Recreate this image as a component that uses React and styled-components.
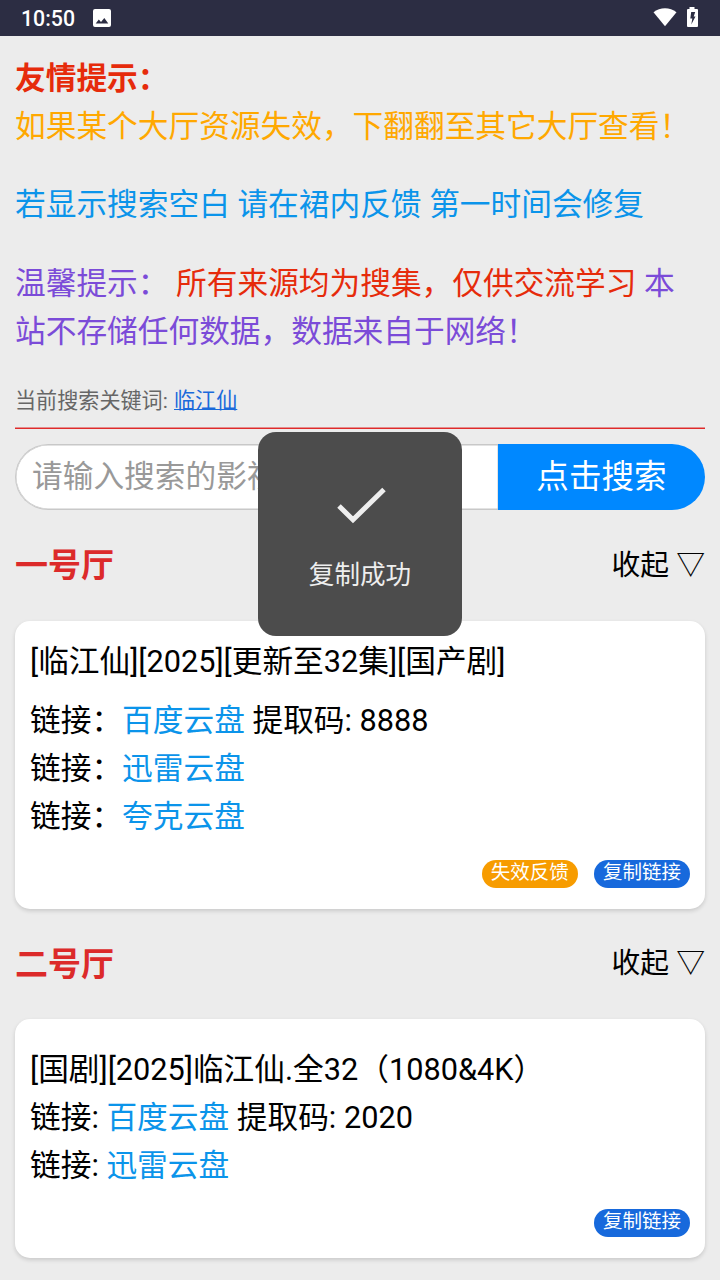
import React from "react";
import styled, { createGlobalStyle } from "styled-components";

const GlobalStyle = createGlobalStyle`
  * { box-sizing: border-box; }
  body {
    margin: 0;
    background: #ececec;
    color: #000;
    font-family: Roboto, "Noto Sans CJK SC", sans-serif;
    font-size: 30.7px;
    line-height: 48px;
  }
`;

const Screen = styled.div`
  width: 720px;
  height: 1280px;
  overflow: hidden;
  position: relative;
  background: #ececec;
`;

const StatusBar = styled.header`
  height: 36px;
  padding: 0 21px;
  display: flex;
  align-items: center;
  background: #2c2d43;
  color: #fff;
  font-size: 21.3px;
  font-weight: 500;
  line-height: 36px;

  svg { display: block; fill: #fff; }
`;

const Clock = styled.span`
  width: 72.4px;
  padding-top: 2px;
`;

const StatusIcons = styled.div`
  margin-left: auto;
  padding-bottom: 2px;
  display: flex;
  align-items: center;
  gap: 9px;
`;

const Content = styled.main`
  padding: 19px 15px 0;
`;

const Notice = styled.p`
  margin: 0 0 30.4px;
  color: ${(p) => p.$color};
`;

const Alert = styled.span`
  color: #e62b0b;
  font-weight: ${(p) => (p.$bold ? 700 : 400)};
`;

const Keyword = styled.div`
  height: 41px;
  color: #666;
  font-size: 21.1px;
  line-height: 29px;
`;

const KeywordLink = styled.a`
  color: #1a6adb;
  text-decoration: underline;
  text-decoration-thickness: 1px;
  margin-left: 1px;
`;

const Divider = styled.div`
  height: 2px;
  border-top: 1px solid #e38e8e;
  background: #e02a2a;
`;

const SearchBar = styled.form`
  display: flex;
  height: 66px;
  margin-top: 15px;
`;

const SearchInput = styled.input`
  flex: 1;
  min-width: 0;
  padding: 0 16px;
  border: 1px solid #c8c8c8;
  border-right: 0;
  border-radius: 33px 0 0 33px;
  background: #fff;
  box-shadow: inset 0 0 0 0.5px #c8c8c8;
  font: inherit;
  outline: 0;

  &::placeholder { color: #999; }
`;

const SearchButton = styled.button`
  width: 207px;
  padding: 0;
  border: 0;
  border-radius: 0 33px 33px 0;
  background: #0088ff;
  color: #fff;
  font: inherit;
  font-size: 32.6px;
`;

const HallHeader = styled.div`
  display: flex;
  align-items: center;
  justify-content: space-between;
  height: ${(p) => p.$height}px;
`;

const HallTitle = styled.h2`
  margin: 0;
  padding-top: 1px;
  color: #dc2a2a;
  font-size: 33px;
  font-weight: 700;
`;

const Collapse = styled.span`
  padding-bottom: 2px;
  font-size: 28.8px;
`;

const Card = styled.section`
  display: flex;
  flex-direction: column;
  height: ${(p) => p.$height}px;
  padding: ${(p) => p.$top}px 15px 21px;
  border-radius: 15px;
  background: #fff;
  box-shadow: 0 2px 4px rgba(0, 0, 0, 0.15);
`;

const CardTitle = styled.div`
  margin-bottom: ${(p) => p.$gap || 0}px;
`;

const DriveLink = styled.a`
  color: #0b94ea;
`;

const Actions = styled.div`
  display: flex;
  justify-content: flex-end;
  gap: 16px;
  margin-top: auto;
`;

const Pill = styled.button`
  width: 96.2px;
  height: 28.6px;
  padding: 0 0 2.6px;
  border: 0;
  border-radius: 14.3px;
  background: ${(p) => p.$color};
  color: #fff;
  font: inherit;
  font-size: 19.5px;
  line-height: 25px;
`;

const Toast = styled.div`
  position: absolute;
  top: 432px;
  left: 258px;
  width: 204px;
  height: 204px;
  padding-top: 44px;
  display: flex;
  flex-direction: column;
  align-items: center;
  border-radius: 18px;
  background: #4c4c4c;
  color: #eee;
  font-size: 25.6px;
  line-height: 36px;

  svg { display: block; margin-bottom: 21px; }
`;

const halls = [
  {
    name: "一号厅", header: 111, height: 288, top: 17, gap: 11,
    title: "[临江仙][2025][更新至32集][国产剧]",
    label: "链接：",
    links: [["百度云盘", " 提取码: 8888"], ["迅雷云盘", ""], ["夸克云盘", ""]],
    report: true,
  },
  {
    name: "二号厅", header: 109.7, height: 239.6, top: 27, gap: 0,
    title: "[国剧][2025]临江仙.全32（1080&4K）",
    label: "链接: ",
    links: [["百度云盘", " 提取码: 2020"], ["迅雷云盘", ""]],
    report: false,
  },
];

export default function App() {
  return (
    <Screen>
      <GlobalStyle />
      <StatusBar>
        <Clock>10:50</Clock>
        <svg width="18" height="18" viewBox="0 0 18 18">
          <path fillRule="evenodd" d="M2 0h14a2 2 0 0 1 2 2v14a2 2 0 0 1-2 2H2a2 2 0 0 1-2-2V2a2 2 0 0 1 2-2zM2.700 14.500h12.600L11.300 9 8 13 5.800 10.500z" />
        </svg>
        <StatusIcons>
          <svg width="24" height="20" viewBox="0 0 24 20">
            <path d="M.5 5.200C7-.2 17-.2 23.500 5.200L12 19.200z" />
          </svg>
          <svg width="13" height="20" viewBox="0 0 13 20">
            <path fillRule="evenodd" d="M3.500 0h5v2H11a1 1 0 0 1 1 1v16a1 1 0 0 1-1 1H2a1 1 0 0 1-1-1V3a1 1 0 0 1 1-1h1.500zM5.200 5L4.300 11.500h2L5.300 17.500 9.500 9.500H7.700L9.200 5z" />
          </svg>
        </StatusIcons>
      </StatusBar>
      <Content>
        <Notice $color="#ffa800">
          <Alert $bold>友情提示：</Alert>
          <br />
          如果某个大厅资源失效，下翻翻至其它大厅查看！
        </Notice>
        <Notice $color="#0b94ea">若显示搜索空白 请在裙内反馈 第一时间会修复</Notice>
        <Notice $color="#7b4bd8">
          温馨提示： <Alert>所有来源均为搜集，仅供交流学习</Alert> 本站不存储任何数据，数据来自于网络！
        </Notice>
        <Keyword>
          当前搜索关键词: <KeywordLink>临江仙</KeywordLink>
        </Keyword>
        <Divider />
        <SearchBar>
          <SearchInput placeholder="请输入搜索的影视名称" />
          <SearchButton type="button">点击搜索</SearchButton>
        </SearchBar>
        {halls.map((hall) => (
          <React.Fragment key={hall.name}>
            <HallHeader $height={hall.header}>
              <HallTitle>{hall.name}</HallTitle>
              <Collapse>收起 ▽</Collapse>
            </HallHeader>
            <Card $height={hall.height} $top={hall.top}>
              <CardTitle $gap={hall.gap}>{hall.title}</CardTitle>
              {hall.links.map(([drive, code]) => (
                <div key={drive}>
                  {hall.label}
                  <DriveLink>{drive}</DriveLink>
                  {code}
                </div>
              ))}
              <Actions>
                {hall.report && <Pill $color="#f79c00">失效反馈</Pill>}
                <Pill $color="#1769dc">复制链接</Pill>
              </Actions>
            </Card>
          </React.Fragment>
        ))}
      </Content>
      <Toast>
        <svg width="60" height="60" viewBox="0 0 60 60" fill="none" stroke="#eee" strokeWidth="5">
          <path d="M9 30L23 43.700 54 13.500" />
        </svg>
        复制成功
      </Toast>
    </Screen>
  );
}
